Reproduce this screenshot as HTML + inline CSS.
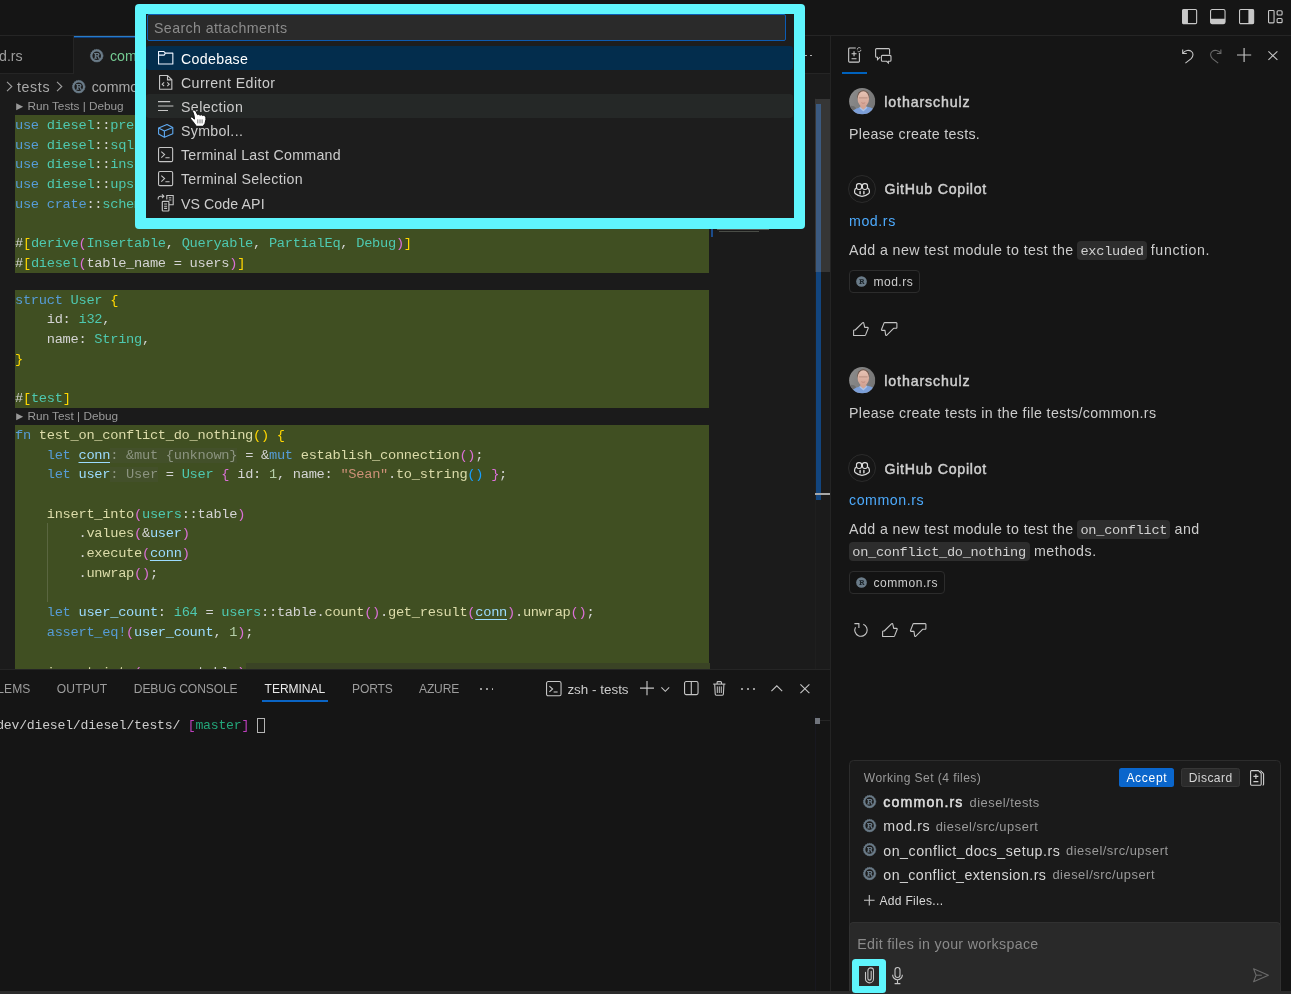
<!DOCTYPE html>
<html>
<head>
<meta charset="utf-8">
<title>VS Code</title>
<style>
*{box-sizing:border-box;margin:0;padding:0}
html,body{width:1291px;height:994px;overflow:hidden;background:#151515}
body{will-change:transform}
body{position:relative;font-family:"Liberation Sans",sans-serif;color:#cccccc;font-size:14.2px}
.abs{position:absolute}
.mono{font-family:"Liberation Mono",monospace}
svg{display:block;position:absolute;overflow:visible}
.tx{position:absolute;white-space:pre;line-height:1;transform-origin:0 0}
/* ---------- code ---------- */
#editor{position:absolute;left:0;top:74px;width:830px;height:595px;background:#1b1b1b;overflow:hidden}
.ln{position:absolute;left:15px;width:694.2px;height:19.9px;padding-top:1px;line-height:19.71px;font-family:"Liberation Mono",monospace;font-size:13.7px;letter-spacing:-0.28px;white-space:pre;color:#d4d4d4;background:#404f22}
.ln i{font-style:normal}
.lens{position:absolute;left:16px;width:200px;font-size:11.8px;color:#999999;white-space:pre;height:17px}
.k{color:#569cd6}.t{color:#4ec9b0}.f{color:#dcdcaa}.v{color:#9cdcfe}.s{color:#ce9178}.n{color:#b5cea8}
.b1{color:#ffd700}.b2{color:#da70d6}.b3{color:#179fff}
.u{text-decoration:underline;text-decoration-thickness:1.3px;text-underline-offset:3.4px}
.h{color:#8c9480;background:#43502a}
.guide{position:absolute;width:1px;background:#5a6640}
</style>
</head>
<body>
<!-- TITLE BAR -->
<div class="abs" id="titlebar" style="left:0;top:0;width:1291px;height:36px;background:#151515;border-bottom:1px solid #252525">
  <!-- layout icons -->
  <svg style="left:1182px;top:9px" width="15.2" height="15.2" viewBox="0 0 15.2 15.2"><rect x="0.55" y="0.55" width="14.1" height="14.1" rx="1.2" fill="none" stroke="#c8c8c8" stroke-width="1.1"/><rect x="0.55" y="0.55" width="5.4" height="14.1" fill="#c8c8c8"/></svg>
  <svg style="left:1210.3px;top:9px" width="15.6" height="15.2" viewBox="0 0 15.6 15.2"><rect x="0.55" y="0.55" width="14.5" height="14.1" rx="1.6" fill="none" stroke="#c8c8c8" stroke-width="1.1"/><path d="M0.55 9.8h14.5v3.5a1.4 1.4 0 0 1-1.4 1.4h-11.7a1.4 1.4 0 0 1-1.4-1.4z" fill="#c8c8c8"/></svg>
  <svg style="left:1238.9px;top:9px" width="15.2" height="15.2" viewBox="0 0 15.2 15.2"><rect x="0.55" y="0.55" width="14.1" height="14.1" rx="1.2" fill="none" stroke="#c8c8c8" stroke-width="1.1"/><rect x="9.4" y="0.55" width="5.3" height="14.1" fill="#c8c8c8"/></svg>
  <svg style="left:1268.3px;top:9.7px" width="15" height="13.4" viewBox="0 0 15 13.4"><rect x="0.55" y="0.55" width="5.5" height="12.3" rx="0.8" fill="none" stroke="#c8c8c8" stroke-width="1.1"/><rect x="9.1" y="0.75" width="5" height="4.2" rx="1" fill="none" stroke="#c8c8c8" stroke-width="1.1"/><rect x="9.1" y="8.45" width="5" height="4.2" rx="1" fill="none" stroke="#c8c8c8" stroke-width="1.1"/></svg>
</div>
<!-- TAB BAR -->
<div class="abs" id="tabbar" style="left:0;top:36px;width:830px;height:38px;background:#151515;border-bottom:1px solid #252525">
  <!-- inactive tab -->
  <div class="abs" style="left:0;top:0;width:74px;height:38px;background:#151515;border-right:1px solid #252525;border-bottom:1px solid #252525"></div>
  <div class="tx" style="left:-1px;top:12.5px;font-size:14.2px;color:#9d9d9d">d.rs</div>
  <!-- active tab -->
  <div class="abs" style="left:74px;top:0;width:140px;height:38px;background:#1b1b1b"></div>
  <div class="abs" style="left:74px;top:0;width:140px;height:1.2px;background:#2a7cc7"></div>
  <div class="abs" style="left:74px;top:1.2px;width:140px;height:1px;background:#0c3d7c"></div>
  <svg class="rust" style="left:89.6px;top:12.6px" width="13.4" height="13.4" viewBox="0 0 14 14"><use href="#rusticon"/></svg>
  <div class="tx" style="left:110px;top:12.5px;font-size:14.2px;color:#73c991">common.rs</div>
  <!-- more dots -->
  <div class="abs" style="left:805.3px;top:18.6px;width:1.7px;height:1.7px;border-radius:1px;background:#c5c5c5"></div>
  <div class="abs" style="left:809.9px;top:18.6px;width:1.7px;height:1.7px;border-radius:1px;background:#c5c5c5"></div>
</div>
<!-- rust icon symbol -->
<svg width="0" height="0" style="left:-10px;top:-10px"><defs>
  <g id="rusticon">
    <circle cx="7" cy="7" r="5.600" fill="none" stroke="#6a7b88" stroke-width="2.200"/>
    <circle cx="7" cy="7" r="6.6" fill="none" stroke="#6a7b88" stroke-width="0.9" stroke-dasharray="1.1 1.2"/>
    <path d="M4.3 4.2h3.6c1.3 0 2 .6 2 1.55 0 .8-.5 1.3-1.3 1.45.5.15.75.5.9 1.1l.2.8h.7v1H8.6l-.35-1.6c-.1-.5-.35-.7-.9-.7H6.5v1.3h.8v1H4.3v-1H5V5.2h-.7zm2.2 1v1.4h1.1c.55 0 .85-.25.85-.7s-.3-.7-.85-.7z" fill="#6a7b88"/>
  </g>
</defs></svg>
<!-- EDITOR -->
<div id="editor">
<div class="lens" style="top:23.9px"><svg style="left:0;top:4.9px" width="7.4" height="7.4" viewBox="0 0 7.4 7.4"><path d="M0.2 0.2L7.2 3.7L0.2 7.2z" fill="#999999"/></svg><span class="tx" style="left:11.4px;top:3.1px;letter-spacing:-0.025px">Run Tests | Debug</span></div>
<div class="ln" style="top:41.00px"><i class="k">use</i> <i class="t">diesel</i>::<i class="t">prelude</i>::*;</div>
<div class="ln" style="top:60.71px"><i class="k">use</i> <i class="t">diesel</i>::<i class="t">sqlite</i>::<i class="t">SqliteConnection</i>;</div>
<div class="ln" style="top:80.42px"><i class="k">use</i> <i class="t">diesel</i>::<i class="t">insert_into</i>;</div>
<div class="ln" style="top:100.13px"><i class="k">use</i> <i class="t">diesel</i>::<i class="t">upsert</i>::*;</div>
<div class="ln" style="top:119.84px"><i class="k">use</i> <i class="k">crate</i>::<i class="t">schema</i>::<i class="t">users</i>;</div>
<div class="ln" style="top:139.55px"></div>
<div class="ln" style="top:159.26px">#<i class="b1">[</i><i class="t">derive</i><i class="b2">(</i><i class="t">Insertable</i>, <i class="t">Queryable</i>, <i class="t">PartialEq</i>, <i class="t">Debug</i><i class="b2">)</i><i class="b1">]</i></div>
<div class="ln" style="top:178.97px">#<i class="b1">[</i><i class="t">diesel</i><i class="b2">(</i>table_name = users<i class="b2">)</i><i class="b1">]</i></div>
<div class="ln" style="top:215.68px"><i class="k">struct</i> <i class="t">User</i> <i class="b1">{</i></div>
<div class="ln" style="top:235.39px">    id: <i class="t">i32</i>,</div>
<div class="ln" style="top:255.10px">    name: <i class="t">String</i>,</div>
<div class="ln" style="top:274.81px"><i class="b1">}</i></div>
<div class="ln" style="top:294.52px"></div>
<div class="ln" style="top:314.23px">#<i class="b1">[</i><i class="t">test</i><i class="b1">]</i></div>
<div class="lens" style="top:333.94px"><svg style="left:0;top:4.9px" width="7.4" height="7.4" viewBox="0 0 7.4 7.4"><path d="M0.2 0.2L7.2 3.7L0.2 7.2z" fill="#999999"/></svg><span class="tx" style="left:11.4px;top:3.1px;letter-spacing:0.004px">Run Test | Debug</span></div>
<div class="ln" style="top:350.94px"><i class="k">fn</i> <i class="f">test_on_conflict_do_nothing</i><i class="b1">()</i> <i class="b1">{</i></div>
<div class="ln" style="top:370.65px">    <i class="k">let</i> <i class="v u">conn</i><i class="h">: &amp;mut {unknown}</i> = &amp;<i class="k">mut</i> <i class="f">establish_connection</i><i class="b2">()</i>;</div>
<div class="ln" style="top:390.36px">    <i class="k">let</i> <i class="v">user</i><i class="h">: User</i> = <i class="t">User</i> <i class="b2">{</i> id: <i class="n">1</i>, name: <i class="s">"Sean"</i>.<i class="f">to_string</i><i class="b3">()</i> <i class="b2">}</i>;</div>
<div class="ln" style="top:410.07px"></div>
<div class="ln" style="top:429.78px">    <i class="f">insert_into</i><i class="b2">(</i><i class="t">users</i>::table<i class="b2">)</i></div>
<div class="ln" style="top:449.49px">        .<i class="f">values</i><i class="b2">(</i>&amp;<i class="v">user</i><i class="b2">)</i></div>
<div class="ln" style="top:469.20px">        .<i class="f">execute</i><i class="b2">(</i><i class="v u">conn</i><i class="b2">)</i></div>
<div class="ln" style="top:488.91px">        .<i class="f">unwrap</i><i class="b2">()</i>;</div>
<div class="ln" style="top:508.62px"></div>
<div class="ln" style="top:528.33px">    <i class="k">let</i> <i class="v">user_count</i>: <i class="t">i64</i> = <i class="t">users</i>::table.<i class="f">count</i><i class="b2">()</i>.<i class="f">get_result</i><i class="b2">(</i><i class="v u">conn</i><i class="b2">)</i>.<i class="f">unwrap</i><i class="b2">()</i>;</div>
<div class="ln" style="top:548.04px">    <i class="k">assert_eq!</i><i class="b2">(</i><i class="v">user_count</i>, <i class="n">1</i><i class="b2">)</i>;</div>
<div class="ln" style="top:567.75px"></div>
<div class="ln" style="top:587.46px;padding-top:2px">    <i class="f">insert_into</i><i class="b2">(</i><i class="t">users</i>::table<i class="b2">)</i></div>
<div class="guide" style="left:46.7px;top:449.49px;height:78.84px"></div>
<div class="abs" style="left:246px;top:588.5px;width:464px;height:7px;background:#3a4325"></div>
<div class="abs" style="left:815px;top:24px;width:1px;height:571px;background:#1f1f1f"></div>
<div class="abs" style="left:815px;top:25px;width:15px;height:173px;background:#363636"></div>
<div class="abs" style="left:815.5px;top:29.5px;width:5px;height:396.5px;background:#12457e"></div>
<div class="abs" style="left:815.5px;top:29.5px;width:5px;height:168.5px;background:#3b5a80"></div>
<div class="abs" style="left:815px;top:418.6px;width:15px;height:2.6px;background:#a8a8a8"></div>
<div class="abs" style="left:711px;top:154px;width:2px;height:9px;background:#1b4b8a"></div>
<div class="abs" style="left:717px;top:154px;width:52px;height:1.5px;background:#6a6f66;opacity:.8"></div>
<div class="abs" style="left:719px;top:156.5px;width:40px;height:1.5px;background:#5c6158;opacity:.7"></div>
</div>
<!-- BREADCRUMBS (drawn over editor top) -->
<div class="abs" style="left:0;top:74px;width:830px;height:24px">
  <svg style="left:5.5px;top:7.2px" width="7" height="11" viewBox="0 0 7 11"><path d="M1 0.8L5.8 5.5L1 10.2" fill="none" stroke="#a0a0a0" stroke-width="1.1"/></svg>
  <div class="tx" style="left:17px;top:5.8px;font-size:14.2px;color:#a9a9a9;letter-spacing:0.646px">tests</div>
  <svg style="left:55.6px;top:7.2px" width="7" height="11" viewBox="0 0 7 11"><path d="M1 0.8L5.8 5.5L1 10.2" fill="none" stroke="#a0a0a0" stroke-width="1.1"/></svg>
  <svg class="rust" style="left:71.5px;top:6px" width="13.4" height="13.4" viewBox="0 0 14 14"><use href="#rusticon"/></svg>
  <div class="tx" style="left:91.7px;top:5.8px;font-size:14.2px;color:#a9a9a9">common.rs</div>
</div>
<!-- PANEL -->
<div class="abs" id="panel" style="left:0;top:669px;width:830px;height:322px;background:#151515;overflow:hidden">
  <div class="abs" style="left:0;top:0;width:830px;height:1px;background:#252525"></div>
  <!-- tabs : top offsets relative to panel (abs y - 669) -->
  <div class="tx ptab" style="left:-2.8px;top:14.1px">LEMS</div>
  <div class="tx ptab" style="left:56.8px;top:14.1px;letter-spacing:0.179px">OUTPUT</div>
  <div class="tx ptab" style="left:133.8px;top:14.1px;letter-spacing:-0.116px">DEBUG CONSOLE</div>
  <div class="tx ptab" style="left:264.6px;top:14.1px;color:#e7e7e7;letter-spacing:-0.052px">TERMINAL</div>
  <div class="tx ptab" style="left:352px;top:14.1px;letter-spacing:-0.139px">PORTS</div>
  <div class="tx ptab" style="left:419px;top:14.1px;letter-spacing:-0.149px">AZURE</div>
  <div class="abs" style="left:262px;top:31.2px;width:65.6px;height:2px;background:#0a64c4"></div>
  <!-- ellipsis after tabs -->
  <div class="dot" style="left:480.2px;top:19.2px"></div><div class="dot" style="left:485.9px;top:19.2px"></div><div class="dot" style="left:491.6px;top:19.2px"></div>
  <!-- terminal icon -->
  <svg style="left:545.8px;top:12px" width="15.6" height="15.3" viewBox="0 0 15.6 15.3"><rect x="0.55" y="0.55" width="14.5" height="14.2" rx="1.6" fill="none" stroke="#c5c5c5" stroke-width="1.1"/><path d="M3.4 5.1L6.6 8L3.4 10.9" fill="none" stroke="#c5c5c5" stroke-width="1.1"/><path d="M7.6 11h4" fill="none" stroke="#c5c5c5" stroke-width="1.1"/></svg>
  <div class="tx" style="left:567.4px;top:14.2px;font-size:13.4px;color:#cccccc;letter-spacing:0.015px">zsh - tests</div>
  <!-- plus -->
  <svg style="left:640px;top:12.4px" width="14" height="14.2" viewBox="0 0 14 14.2"><path d="M7 0v14.2M0 7.1h14" stroke="#c5c5c5" stroke-width="1.15" fill="none"/></svg>
  <!-- chevron down -->
  <svg style="left:661.4px;top:18.2px" width="8.6" height="5" viewBox="0 0 8.6 5"><path d="M0.4 0.4L4.3 4.3L8.2 0.4" stroke="#c5c5c5" stroke-width="1.05" fill="none"/></svg>
  <!-- split -->
  <svg style="left:683.9px;top:12.4px" width="14.6" height="14.2" viewBox="0 0 14.6 14.2"><rect x="0.55" y="0.55" width="13.5" height="13.1" rx="1.6" fill="none" stroke="#c5c5c5" stroke-width="1.1"/><path d="M7.3 0.5v13.2" stroke="#c5c5c5" stroke-width="1.1"/></svg>
  <!-- trash -->
  <svg style="left:712.9px;top:11.8px" width="12.6" height="14.8" viewBox="0 0 12.6 14.8"><path d="M0.2 3.1h12.2" stroke="#c5c5c5" stroke-width="1.1"/><path d="M4.1 2.9V1.5a0.9 0.9 0 0 1 .9-.9h2.6a0.9 0.9 0 0 1 .9.9v1.4" fill="none" stroke="#c5c5c5" stroke-width="1.1"/><path d="M1.7 3.3l.5 9.7a1.2 1.2 0 0 0 1.2 1.2h5.8a1.2 1.2 0 0 0 1.2-1.2l.5-9.7" fill="none" stroke="#c5c5c5" stroke-width="1.1"/><path d="M4.3 5.4v6.6M6.3 5.4v6.6M8.3 5.4v6.6" stroke="#c5c5c5" stroke-width="1"/></svg>
  <!-- ellipsis -->
  <div class="dot" style="left:741.3px;top:19.2px"></div><div class="dot" style="left:747.1px;top:19.2px"></div><div class="dot" style="left:752.9px;top:19.2px"></div>
  <!-- chevron up -->
  <svg style="left:770.6px;top:16.4px" width="11.6" height="6.6" viewBox="0 0 11.6 6.6"><path d="M0.4 6.2L5.8 0.8L11.2 6.2" stroke="#c5c5c5" stroke-width="1.1" fill="none"/></svg>
  <!-- close -->
  <svg style="left:799.9px;top:15.4px" width="9.8" height="9.6" viewBox="0 0 9.8 9.6"><path d="M0.4 0.4L9.4 9.2M9.4 0.4L0.4 9.2" stroke="#c5c5c5" stroke-width="1.1" fill="none"/></svg>
  <!-- terminal text -->
  <div class="tx mono" style="left:-3.8px;top:49.9px;font-size:13.14px;letter-spacing:-0.215px;color:#cccccc">dev/diesel/diesel/tests/ <span style="color:#bc3fbc">[</span><span style="color:#23a67a">master</span><span style="color:#bc3fbc">]</span></div>
  <div class="abs" style="left:257px;top:49.1px;width:8px;height:15.4px;border:1.1px solid #b4b4b4"></div>
  <!-- terminal scrollbar area -->
  <div class="abs" style="left:815px;top:46px;width:1px;height:277px;background:#181820"></div>
  <div class="abs" style="left:815px;top:50.6px;width:15px;height:1px;background:#262626"></div>
  <div class="abs" style="left:815.3px;top:48.5px;width:5px;height:6.5px;background:#70747c"></div>
</div>
<style>
.ptab{font-size:12.05px;color:#9d9d9d;letter-spacing:0.1px}
.dot{position:absolute;width:1.9px;height:1.9px;border-radius:1px;background:#c5c5c5}
</style>
<!-- CHAT SIDEBAR (absolute page coordinates) -->
<div class="abs" id="chat" style="left:830px;top:36px;width:461px;height:955px;background:#151515;border-left:1px solid #242424"></div>
<div class="abs" id="chatc" style="left:0;top:0;width:1291px;height:994px;pointer-events:none">
  <!-- header icons -->
  <svg style="left:847.6px;top:47.4px" width="13.6" height="15.7" viewBox="0 0 14 16.4">
    <path d="M8 1H1.6a1 1 0 0 0-1 1v12.8a1 1 0 0 0 1 1h9.2a1 1 0 0 0 1-1V6.2" fill="none" stroke="#d0d0d0" stroke-width="1.1"/>
    <path d="M6.2 4.4v5.2M3.6 7h5.2M3.6 12.3h5.2" fill="none" stroke="#d0d0d0" stroke-width="1.1"/>
    <path d="M9.6 2.6a2 2 0 0 1 3.4-1.4M13.4 3a2 2 0 0 1-3.4 1.4" fill="none" stroke="#d0d0d0" stroke-width="0.9"/>
  </svg>
  <svg style="left:875px;top:47.6px" width="16.6" height="15.4" viewBox="0 0 16.6 15.4">
    <path d="M14.6 6.6V1.6a1 1 0 0 0-1-1H1.6a1 1 0 0 0-1 1v6.6a1 1 0 0 0 1 1h.9v2.6l2.6-2.6" fill="none" stroke="#c5c5c5" stroke-width="1.1"/>
    <path d="M7.4 7.4h7.6a1 1 0 0 1 1 1v3.9a1 1 0 0 1-1 1h-1.6v1.7l-1.8-1.7H7.4a1 1 0 0 1-1-1V8.4a1 1 0 0 1 1-1z" fill="none" stroke="#c5c5c5" stroke-width="1.1"/>
  </svg>
  <div class="abs" style="left:842.3px;top:71.8px;width:25px;height:2.5px;background:#0062bd"></div>
  <!-- undo / redo / plus / close -->
  <svg style="left:1181.6px;top:48.6px" width="11.6" height="14.6" viewBox="0 0 11.6 14.6"><path d="M0.7 0.4v4.1h4.1" fill="none" stroke="#c5c5c5" stroke-width="1.1"/><path d="M0.9 4.2C3 1.4 7 0.6 9.4 2.4c2.3 1.8 2 5-.2 7.200L3.4 14.2" fill="none" stroke="#c5c5c5" stroke-width="1.1"/></svg>
  <svg style="left:1210px;top:48.6px" width="11.6" height="14.6" viewBox="0 0 11.6 14.6"><g transform="translate(11.6,0) scale(-1,1)"><path d="M0.7 0.4v4.1h4.1" fill="none" stroke="#6a6a6a" stroke-width="1.1"/><path d="M0.9 4.2C3 1.4 7 0.6 9.4 2.4c2.3 1.8 2 5-.2 7.200L3.4 14.2" fill="none" stroke="#6a6a6a" stroke-width="1.1"/></g></svg>
  <svg style="left:1237px;top:48px" width="14.2" height="14" viewBox="0 0 14.2 14"><path d="M7.1 0v14M0 7h14.2" stroke="#c5c5c5" stroke-width="1.15" fill="none"/></svg>
  <svg style="left:1268.1px;top:51px" width="9.8" height="9.2" viewBox="0 0 9.8 9.2"><path d="M0.4 0.4L9.4 8.8M9.4 0.4L0.4 8.8" stroke="#c5c5c5" stroke-width="1.1" fill="none"/></svg>

  <!-- message 1 : user -->
  <svg style="left:848.8px;top:87.7px" width="26.4" height="26.4" viewBox="0 0 26.4 26.4"><use href="#avatar"/></svg>
  <div class="tx nm" style="left:884.3px;top:95.2px;letter-spacing:0.873px">lotharschulz</div>
  <div class="tx msg" style="left:849.0px;top:127.1px;letter-spacing:0.325px">Please create tests.</div>

  <!-- message 2 : copilot -->
  <div class="cpav" style="left:848px;top:174.5px"><svg style="left:5.3px;top:7.3px" width="16" height="14" viewBox="0 0 16 14"><use href="#copilot"/></svg></div>
  <div class="tx nm" style="left:884.4px;top:182.4px;letter-spacing:0.738px">GitHub Copilot</div>
  <div class="tx msg lnk" style="left:849.0px;top:213.5px;letter-spacing:0.573px">mod.rs</div>
  <div class="tx msg" style="left:849.0px;top:243.1px;letter-spacing:0.425px">Add a new test module to test the</div>
  <div class="code" style="left:1077.2px;top:241.2px;width:69.5px"><span>excluded</span></div>
  <div class="tx msg" style="left:1150.8px;top:243.1px;letter-spacing:0.629px">function.</div>
  <div class="pill" style="left:849.2px;top:270.2px;width:70.8px"><svg width="11" height="11" viewBox="0 0 14 14" style="left:6.2px;top:5.2px"><use href="#rustfill"/></svg><span class="tx" style="left:23.2px;top:4.6px;letter-spacing:0.512px">mod.rs</span></div>
  <!-- thumbs -->
  <svg style="left:852.7px;top:321.6px" width="16" height="14.2" viewBox="0 0 16 14.2"><use href="#thumbup"/></svg>
  <svg style="left:881.4px;top:321.8px" width="16.6" height="14.2" viewBox="0 0 16.6 14.2"><use href="#thumbdn"/></svg>

  <!-- message 3 : user -->
  <svg style="left:848.8px;top:366.7px" width="26.4" height="26.4" viewBox="0 0 26.4 26.4"><use href="#avatar"/></svg>
  <div class="tx nm" style="left:884.3px;top:373.7px;letter-spacing:0.873px">lotharschulz</div>
  <div class="tx msg" style="left:849.0px;top:405.9px;letter-spacing:0.383px">Please create tests in the file tests/common.rs</div>

  <!-- message 4 : copilot -->
  <div class="cpav" style="left:848px;top:454px"><svg style="left:5.3px;top:7.3px" width="16" height="14" viewBox="0 0 16 14"><use href="#copilot"/></svg></div>
  <div class="tx nm" style="left:884.4px;top:461.8px;letter-spacing:0.738px">GitHub Copilot</div>
  <div class="tx msg lnk" style="left:849.0px;top:492.9px;letter-spacing:0.548px">common.rs</div>
  <div class="tx msg" style="left:849.0px;top:522.1px;letter-spacing:0.425px">Add a new test module to test the</div>
  <div class="code" style="left:1077.2px;top:520.2px;width:93.2px"><span>on_conflict</span></div>
  <div class="tx msg" style="left:1174.6px;top:522.1px;letter-spacing:0.476px">and</div>
  <div class="code" style="left:849px;top:542px;width:180.8px"><span>on_conflict_do_nothing</span></div>
  <div class="tx msg" style="left:1033.9px;top:544.1px;letter-spacing:0.555px">methods.</div>
  <div class="pill" style="left:849.2px;top:571px;width:95.8px"><svg width="11" height="11" viewBox="0 0 14 14" style="left:6.2px;top:5.2px"><use href="#rustfill"/></svg><span class="tx" style="left:23.2px;top:4.6px;letter-spacing:0.558px">common.rs</span></div>
  <!-- refresh + thumbs -->
  <svg style="left:854px;top:623px" width="14.2" height="13.6" viewBox="0 0 14.2 13.6"><path d="M0.4 0.6h4.5v4.3" fill="none" stroke="#c5c5c5" stroke-width="1.1"/><path d="M9.3 1.3A6.2 6.2 0 1 1 1.500 4.200" fill="none" stroke="#c5c5c5" stroke-width="1.1"/></svg>
  <svg style="left:881.6px;top:622.8px" width="16" height="14.2" viewBox="0 0 16 14.2"><use href="#thumbup"/></svg>
  <svg style="left:910.3px;top:623px" width="16.6" height="14.2" viewBox="0 0 16.6 14.2"><use href="#thumbdn"/></svg>
</div>
<svg width="0" height="0" style="left:-10px;top:-10px"><defs>
    <clipPath id="avclip"><circle cx="13.2" cy="13.2" r="13.1"/></clipPath>
  <linearGradient id="avbg" x1="0" y1="0" x2="1" y2="0.3"><stop offset="0" stop-color="#8c8c8c"/><stop offset="1" stop-color="#777777"/></linearGradient>
  <linearGradient id="avskin" x1="0" y1="0" x2="0" y2="1"><stop offset="0" stop-color="#e6c3b4"/><stop offset="1" stop-color="#d3a292"/></linearGradient>
  <filter id="avblur" x="-10%" y="-10%" width="120%" height="120%"><feGaussianBlur stdDeviation="0.45"/></filter>
  <g id="avatar"><g clip-path="url(#avclip)">
    <rect x="0" y="0" width="26.4" height="26.4" fill="url(#avbg)"/>
    <g filter="url(#avblur)">
      <path d="M-1 19c3-2 6-1.500 8 1l-2 8h-6z" fill="#6e6e6e"/>
      <ellipse cx="14.300" cy="8.800" rx="6.100" ry="6.600" fill="#6b5348"/>
      <path d="M3.200 23.500c2-2.200 5.500-3.300 8-4.200l3.200 1.800 3-2.600c2.600.400 5.600 1.300 8 3.200v6h-22z" fill="#7b9fd8"/>
      <path d="M11.200 16.500h6.200v3.200l-3 2.800-3.200-2.400z" fill="#d2a493"/>
      <ellipse cx="14.300" cy="10.900" rx="5.700" ry="7.700" fill="url(#avskin)"/>
      <path d="M10 9.900h8.600" stroke="#a87f72" stroke-width="0.700" fill="none"/>
      <path d="M12.400 14.700c1.200.800 2.600.800 3.800 0" stroke="#b88072" stroke-width="0.700" fill="none"/>
      <path d="M10.600 19.600l3.800 3 3.600-3.400" stroke="#a9c2ea" stroke-width="1.200" fill="none"/>
    </g>
  </g></g>
  <g id="copilot">
    <rect x="2.5" y="0.6" width="5.1" height="5.9" rx="2.2" fill="none" stroke="#dcdcdc" stroke-width="1.2"/>
    <rect x="8.4" y="0.6" width="5.1" height="5.9" rx="2.2" fill="none" stroke="#dcdcdc" stroke-width="1.2"/>
    <path d="M2.6 4.8C1.2 5.6 0.6 6.600 0.6 8v1.300c0 .600.300 1.100.900 1.500C3.200 12.200 5.500 13.400 8 13.400s4.800-1.200 6.500-2.600c.600-.400.900-.900.900-1.500V8c0-1.400-.600-2.400-2-3.200" fill="none" stroke="#dcdcdc" stroke-width="1.2"/>
    <path d="M6.100 8.500v2.300M9.900 8.500v2.300" stroke="#dcdcdc" stroke-width="1.400" stroke-linecap="round"/>
  </g>
  <g id="thumbup"><path d="M0.600 13.500V8.800a0.800 0.800 0 0 1 .8-.8h0.800L9.700 0.700a0.600 0.600 0 0 1 1 .2l1 4.500h2.800a0.700 0.700 0 0 1 .7.9l-2.600 6.600a1 1 0 0 1-.9.600z" fill="none" stroke="#c5c5c5" stroke-width="1.1" stroke-linejoin="round"/></g>
  <g id="thumbdn"><path d="M3.800 0.600h11.400a0.700 0.700 0 0 1 .7.700v4.300a0.700 0.700 0 0 1-.7.700h-2.600L5.600 13.300a0.600 0.600 0 0 1-1-.3L4 8.400H1a0.600 0.600 0 0 1-.5-.9L3 1.100a0.900 0.900 0 0 1 .8-.5z" fill="none" stroke="#c5c5c5" stroke-width="1.1" stroke-linejoin="round"/></g>
  <g id="rustfill"><circle cx="7" cy="7" r="6.800" fill="#6a7b88"/><path d="M4.200 4h3.800c1.400 0 2.100.7 2.100 1.650 0 .8-.5 1.350-1.300 1.500.5.150.8.500.900 1.100l.2.850h.700v1H8.700l-.350-1.650c-.1-.5-.4-.7-.9-.7H6.500v1.350h.8v1H4.200v-1H5V5h-.8zm2.300 1v1.500h1.200c.55 0 .9-.250.900-.750S8.250 5 7.700 5z" fill="#1b2328"/></g>
</defs></svg>
<style>
.nm{font-size:14.2px;color:#cfcfcf;-webkit-text-stroke:0.45px #cfcfcf}
.msg{font-size:14.2px;color:#cccccc}
.lnk{color:#4daafc}
.code{position:absolute;height:18.7px;background:#2d2d2d;border-radius:4px}
.code span{position:absolute;left:3.3px;top:3.7px;font-family:"Liberation Mono",monospace;font-size:13.6px;line-height:1;color:#d0d0d0;white-space:pre;letter-spacing:-0.27px}
.pill{position:absolute;height:22.6px;border:1px solid #2c2c2c;border-radius:4px;background:#131313}
.pill .tx{font-size:12.05px;color:#cccccc}
.avatar{position:absolute;width:26.4px;height:26.4px;border-radius:50%;overflow:hidden;background:#6f6f6f}
.avatar i{position:absolute;left:8.6px;top:3.2px;width:11px;height:14.5px;border-radius:48%;background:#d6ab98}
.avatar b{position:absolute;left:8.200px;top:2.800px;width:11.800px;height:4.500px;border-radius:50% 50% 30% 30%;background:#7d6a60;opacity:.75}
.avatar u{position:absolute;left:2.500px;top:17.600px;width:22px;height:14px;border-radius:45% 45% 0 0;background:#7ea3dc}
.cpav{position:absolute;width:28.4px;height:28.4px;border-radius:50%;border:1px solid #2b2b2b;background:#161616}
</style>
<!-- WORKING SET + INPUT -->
<div class="abs" style="left:849.4px;top:760.4px;width:431.6px;height:232px;background:#1a1a1a;border:1px solid #2c2c2c;border-radius:4.5px 4.5px 0 0"></div>
<div class="abs" style="left:849.4px;top:922.2px;width:431.6px;height:69px;background:#292929;border:1px solid #313131;border-bottom:0;border-radius:4.5px 4.5px 0 0"></div>
<div class="abs" id="ws" style="left:0;top:0;width:1291px;height:994px">
  <div class="tx" style="left:863.8px;top:771.6px;font-size:12.05px;color:#9a9a9a;letter-spacing:0.436px">Working Set (4 files)</div>
  <div class="abs" style="left:1119px;top:768.1px;width:55.2px;height:18.6px;background:#0a66cc;border-radius:2.5px"></div>
  <div class="tx" style="left:1126.4px;top:771.6px;font-size:12.05px;color:#ffffff;letter-spacing:0.676px">Accept</div>
  <div class="abs" style="left:1181.2px;top:768.1px;width:58.5px;height:18.6px;background:#2b2b2b;border:1px solid #363636;border-radius:2.5px"></div>
  <div class="tx" style="left:1188.7px;top:771.6px;font-size:12.05px;color:#d4d4d4;letter-spacing:0.437px">Discard</div>
  <!-- diff multiple icon -->
  <svg style="left:1250px;top:769.6px" width="14.4" height="15.8" viewBox="0 0 14.4 15.8">
    <path d="M8.400 0.600H1.500a0.900 0.900 0 0 0-.9.900v12.800a0.900 0.900 0 0 0 .9.900h8.800a0.900 0.900 0 0 0 .9-.9V3.400z" fill="none" stroke="#d0d0d0" stroke-width="1.1" stroke-linejoin="round"/>
    <path d="M10.400 0.600l2.900 2.800a0.900 0.900 0 0 1 .3.700v10.200a0.900 0.900 0 0 1-.9.900" fill="none" stroke="#d0d0d0" stroke-width="1.1"/>
    <path d="M5.900 3.900v5M3.400 6.400h5M3.400 11.600h5" fill="none" stroke="#d0d0d0" stroke-width="1.1"/>
  </svg>
  <!-- file rows -->
  <svg style="left:863px;top:794.6px" width="13.2" height="13.2" viewBox="0 0 14 14"><use href="#rusticon"/></svg>
  <div class="tx" style="left:883.3px;top:795.4px;font-size:14.2px;color:#e0e0e0;-webkit-text-stroke:0.45px #e0e0e0;letter-spacing:1.125px">common.rs</div>
  <div class="tx" style="left:969.6px;top:796.6px;font-size:12.9px;color:#9a9a9a;letter-spacing:0.475px">diesel/tests</div>
  <svg style="left:863px;top:818.6px" width="13.2" height="13.2" viewBox="0 0 14 14"><use href="#rusticon"/></svg>
  <div class="tx" style="left:883.3px;top:819.4px;font-size:14.2px;color:#d6d6d6;letter-spacing:0.573px">mod.rs</div>
  <div class="tx" style="left:935.7px;top:820.6px;font-size:12.9px;color:#9a9a9a;letter-spacing:0.514px">diesel/src/upsert</div>
  <svg style="left:863px;top:842.7px" width="13.2" height="13.2" viewBox="0 0 14 14"><use href="#rusticon"/></svg>
  <div class="tx" style="left:883.3px;top:843.5px;font-size:14.2px;color:#d6d6d6;letter-spacing:0.518px">on_conflict_docs_setup.rs</div>
  <div class="tx" style="left:1066.0px;top:844.7px;font-size:12.9px;color:#9a9a9a;letter-spacing:0.514px">diesel/src/upsert</div>
  <svg style="left:863px;top:866.8px" width="13.2" height="13.2" viewBox="0 0 14 14"><use href="#rusticon"/></svg>
  <div class="tx" style="left:883.3px;top:867.6px;font-size:14.2px;color:#d6d6d6;letter-spacing:0.453px">on_conflict_extension.rs</div>
  <div class="tx" style="left:1052.4px;top:868.8px;font-size:12.9px;color:#9a9a9a;letter-spacing:0.514px">diesel/src/upsert</div>
  <!-- add files -->
  <svg style="left:864.2px;top:895px" width="10.6" height="10.4" viewBox="0 0 10.6 10.4"><path d="M5.300 0v10.400M0 5.200h10.600" stroke="#c5c5c5" stroke-width="1.1" fill="none"/></svg>
  <div class="tx" style="left:879.4px;top:895.2px;font-size:12.05px;color:#d8d8d8;letter-spacing:0.303px">Add Files...</div>
  <!-- placeholder -->
  <div class="tx" style="left:857.2px;top:937.4px;font-size:14.2px;color:#8a8a8a;letter-spacing:0.339px">Edit files in your workspace</div>
  <!-- attach (highlighted) -->
  
  
  
  <!-- mic -->
  <svg style="left:892.2px;top:966.6px" width="11" height="17.200" viewBox="0 0 11 17.2"><rect x="3" y="0.550" width="5" height="10" rx="2.500" fill="none" stroke="#c5c5c5" stroke-width="1.1"/><path d="M0.600 7.800a4.900 4.900 0 0 0 9.800 0M5.500 12.800v3.700M2.600 16.600h5.800" fill="none" stroke="#c5c5c5" stroke-width="1.1"/></svg>
  <!-- send -->
  <svg style="left:1252.8px;top:967.8px" width="16.2" height="14.4" viewBox="0 0 16.2 14.4"><path d="M0.600 0.700L15.400 7.200L0.600 13.700L3.100 7.200z" fill="none" stroke="#6b6b6b" stroke-width="1.05" stroke-linejoin="round"/><path d="M3.100 7.200h5.700" stroke="#6b6b6b" stroke-width="1.05"/></svg>
</div>
<!-- STATUS STRIP -->
<div class="abs" style="left:0;top:990.8px;width:1291px;height:4px;background:#2b2b2b"></div>
<div class="abs" style="left:852px;top:958.8px;width:34px;height:34.6px;background:#5ff5fd;border-radius:3.5px"></div>
<div class="abs" style="left:859px;top:966px;width:20px;height:19.6px;background:#2a2a2a"></div>
<svg style="left:864.6px;top:967.2px" width="9" height="16.4" viewBox="0 0 9 16.4"><path d="M6.200 4.200v7.300a1.650 1.650 0 0 1-3.300 0V3.700a2.800 2.800 0 0 1 5.600 0v8.200a4 4 0 0 1-8 0V5.400" fill="none" stroke="#c8c8c8" stroke-width="1.05" stroke-linecap="round"/></svg>
<!-- QUICK PICK with cyan highlight frame -->
<div class="abs" id="qpframe" style="left:135.2px;top:4.2px;width:669.8px;height:224.4px;background:#5ff5fd;border-radius:4px"></div>
<div class="abs" id="qp" style="left:146.4px;top:13.8px;width:647.6px;height:203.9px;background:#1d1d1d;overflow:hidden">
  <!-- input -->
  <div class="abs" style="left:1px;top:0;width:638.6px;height:27.4px;background:#2a2a2a;border:1.4px solid #0c5cb4;border-radius:2px"></div>
  <div class="tx" style="left:7.6px;top:7.2px;font-size:14.2px;color:#8c8c8c;letter-spacing:0.406px">Search attachments</div>
  <!-- rows: offsets relative to qp (abs - 13.8 / abs - 146.4) -->
  <div class="abs" style="left:0;top:32.1px;width:647px;height:24px;background:#032d4d;border-radius:3px"></div>
  <div class="abs" style="left:0;top:80.4px;width:647px;height:24.2px;background:#252827;border-radius:3px"></div>
  <!-- folder -->
  <svg style="left:11.6px;top:37.6px" width="15.4" height="13.6" viewBox="0 0 15.4 13.6"><path d="M0.550 13.050V0.550h5.400l1.500 1.600h7.400v10.900z" fill="none" stroke="#eef4ff" stroke-width="1.1" stroke-linejoin="round"/><path d="M0.550 4.100h5.600l1.300-1.950" fill="none" stroke="#eef4ff" stroke-width="1.1"/></svg>
  <div class="tx qi" style="left:34.5px;top:38.4px;color:#ffffff;letter-spacing:0.339px">Codebase</div>
  <!-- file-code -->
  <svg style="left:12.5px;top:61.200px" width="13.4" height="14.8" viewBox="0 0 13.4 14.8"><path d="M0.550 0.550h8.100l4.200 4.200v9.500h-12.300z" fill="none" stroke="#c5c5c5" stroke-width="1.1" stroke-linejoin="round"/><path d="M8.500 0.700v4.200h4.200" fill="none" stroke="#c5c5c5" stroke-width="1.1"/><path d="M5.100 7.300l-1.900 1.900 1.900 1.900M8.300 7.300l1.900 1.900-1.900 1.900" fill="none" stroke="#c5c5c5" stroke-width="1.1"/></svg>
  <div class="tx qi" style="left:34.5px;top:62px;letter-spacing:0.442px">Current Editor</div>
  <!-- selection (lines) -->
  <svg style="left:11.600px;top:87.100px" width="15.400" height="10.200" viewBox="0 0 15.4 10.2"><path d="M0 0.600h12.200M0 5h15.400M0 9.500h10" stroke="#c5c5c5" stroke-width="1.1" fill="none"/></svg>
  <div class="tx qi" style="left:34.5px;top:86.1px;letter-spacing:0.447px">Selection</div>
  <!-- symbol cube -->
  <svg style="left:11.600px;top:110.200px" width="15.400" height="13.800" viewBox="0 0 15.4 13.8"><path d="M0.600 4.100L9 0.600l5.800 3v6.200L6.400 13.200L0.600 10.100z" fill="none" stroke="#5fa9f0" stroke-width="1.1" stroke-linejoin="round"/><path d="M0.600 4.100l5.800 3 8.400-3.500M6.400 7.100v6.100" fill="none" stroke="#5fa9f0" stroke-width="1.1" stroke-linejoin="round"/></svg>
  <div class="tx qi" style="left:34.5px;top:110.3px;letter-spacing:0.362px">Symbol...</div>
  <!-- terminal 1 -->
  <svg style="left:11.700px;top:133.500px" width="15.200" height="15.200" viewBox="0 0 15.2 15.2"><rect x="0.550" y="0.550" width="14.100" height="14.100" rx="1.400" fill="none" stroke="#c5c5c5" stroke-width="1.1"/><path d="M3.300 4.600l3.300 3-3.300 3M7.400 10.700h4.200" fill="none" stroke="#c5c5c5" stroke-width="1.1"/></svg>
  <div class="tx qi" style="left:34.5px;top:134.5px;letter-spacing:0.302px">Terminal Last Command</div>
  <!-- terminal 2 -->
  <svg style="left:11.700px;top:157.600px" width="15.200" height="15.200" viewBox="0 0 15.2 15.2"><rect x="0.550" y="0.550" width="14.100" height="14.100" rx="1.400" fill="none" stroke="#c5c5c5" stroke-width="1.1"/><path d="M3.300 4.600l3.300 3-3.300 3M7.400 10.700h4.200" fill="none" stroke="#c5c5c5" stroke-width="1.1"/></svg>
  <div class="tx qi" style="left:34.5px;top:158.7px;letter-spacing:0.343px">Terminal Selection</div>
  <!-- references icon -->
  <svg style="left:10.800px;top:180.600px" width="16.800" height="17.600" viewBox="0 0 16.8 17.6">
    <path d="M1.200 5.400V4.300a2 2 0 0 1 2-2h3.400M5 0.400l1.900 1.900L5 4.200" fill="none" stroke="#c5c5c5" stroke-width="1.05"/>
    <path d="M9.800 5.400V1.500h6.400v9.200h-4.300" fill="none" stroke="#c5c5c5" stroke-width="1.1"/>
    <path d="M11.800 3.800h2.600M11.800 6h2.600" stroke="#c5c5c5" stroke-width="1"/>
    <rect x="5.300" y="7.300" width="6.600" height="9.700" rx="0.800" fill="none" stroke="#c5c5c5" stroke-width="1.2"/>
    <path d="M7.100 10h3M7.100 12.200h3M7.100 14.400h3" stroke="#c5c5c5" stroke-width="1.100"/>
  </svg>
  <div class="tx qi" style="left:34.5px;top:183.6px;letter-spacing:0.090px">VS Code API</div>
</div>
<!-- hand cursor -->
<svg style="left:180px;top:98px" width="40" height="36" viewBox="0 0 40 36">
  <path d="M13.800 11.900L15.500 12.600L17.500 16.700Q18.200 16 19 16.500L20.200 17.300Q20.800 16.400 21.600 16.800L22.700 17.600Q23.400 17.100 24.300 17.600L25.900 18.700L25.900 21.700L25 25.400L23.200 28.300L16.300 28.300L14.400 25.400L10.700 20.900Q10.100 19.700 10.800 19.200Q11.600 18.700 12.400 19.400L14.500 21.100L14 17.300L12.600 13.300Q12.600 11.600 13.800 11.900Z" fill="#ffffff" stroke="#101010" stroke-width="1" stroke-linejoin="round"/>
  <path d="M17.800 21.400v4M20 21.400v4M22.100 21.400v4" stroke="#444444" stroke-width="0.750"/>
</svg>
<style>.qi{font-size:14.2px;color:#cccccc}</style>
</body>
</html>
